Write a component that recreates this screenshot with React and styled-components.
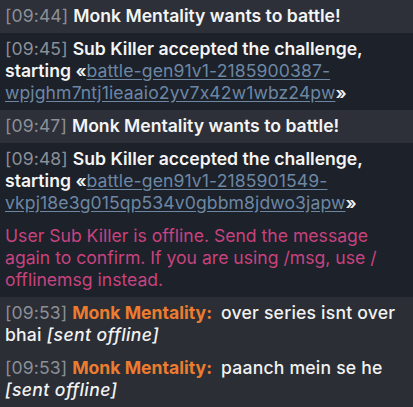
import React from 'react';
import styled, { createGlobalStyle } from 'styled-components';

const GlobalStyle = createGlobalStyle`
    html, body {
        margin: 0;
        padding: 0;
        background: #2b2e35;
    }
    body {
        font-family: "Inter", "Noto Sans", sans-serif;
    }
`;

const messages = [
    { time: '09:44', kind: 'challenge', text: 'Monk Mentality wants to battle!' },
    { time: '09:45', kind: 'accept', who: 'Sub Killer', room: 'battle-gen91v1-2185900387-wpjghm7ntj1ieaaio2yv7x42w1wbz24pw' },
    { time: '09:47', kind: 'challenge', text: 'Monk Mentality wants to battle!' },
    { time: '09:48', kind: 'accept', who: 'Sub Killer', room: 'battle-gen91v1-2185901549-vkpj18e3g015qp534v0gbbm8jdwo3japw' },
];

const chat = [
    { time: '09:53', name: 'Monk Mentality', text: 'over series isnt over bhai' },
    { time: '09:53', name: 'Monk Mentality', text: 'paanch mein se he' },
];

const App = () => {
    return (
        <Log>
            <GlobalStyle />
            {messages.map((m, i) => (
                <Notice key={i} $light={m.kind === 'challenge'}>
                    <Stamp>[{m.time}]</Stamp>{' '}
                    {m.kind === 'challenge' ? (
                        <Strong>{m.text}</Strong>
                    ) : (
                        <Strong>
                            {m.who} accepted the challenge, starting «
                            <BattleLink href="#">{m.room}</BattleLink>»
                        </Strong>
                    )}
                </Notice>
            ))}
            <ErrorLine>
                User Sub Killer is offline. Send the message again to confirm. If you are using /msg, use /<wbr />offlinemsg instead.
            </ErrorLine>
            <ChatArea>
                {chat.map((c, i) => (
                    <ChatLine key={i}>
                        <Stamp>[{c.time}]</Stamp>{' '}
                        <Username>{c.name}:</Username>{' '}
                        <Said>{c.text}</Said>{' '}
                        <Offline>[sent offline]</Offline>
                    </ChatLine>
                ))}
            </ChatArea>
        </Log>
    );
};

export default App;

const Log = styled.div`
    width: 413px;
    height: 407px;
    overflow: hidden;
    background: #1c212a;
    color: #f2f2f2;
    font-size: 17.6px;
    line-height: 22px;
`;

const Notice = styled.div`
    padding: 5px 4px 6px 5px;
    background: ${p => (p.$light ? '#2d3038' : '#1c212a')};
`;

const Stamp = styled.span`
    color: #8b8f97;
    font-weight: 400;
    letter-spacing: 0.1px;
`;

const Strong = styled.span`
    font-weight: 600;
    color: #f4f4f4;
`;

const BattleLink = styled.a`
    color: #6d87a3;
    font-weight: 400;
    letter-spacing: 0.1px;
    text-decoration: underline;
    text-underline-offset: 2px;
`;

const ErrorLine = styled.div`
    padding: 5px 4px 6px 5px;
    color: #c8437f;
`;

const ChatArea = styled.div`
    background: #2b2e35;
    padding-bottom: 4px;
`;

const ChatLine = styled.div`
    padding: 5px 4px 6px 5px;
`;

const Username = styled.strong`
    color: #ec7c30;
    font-weight: 700;
    margin-right: 4px;
`;

const Said = styled.span`
    color: #f2f2f2;
    font-weight: 500;
    letter-spacing: 0.2px;
`;

const Offline = styled.em`
    color: #f2f2f2;
    font-weight: 500;
    letter-spacing: 0.4px;
`;
